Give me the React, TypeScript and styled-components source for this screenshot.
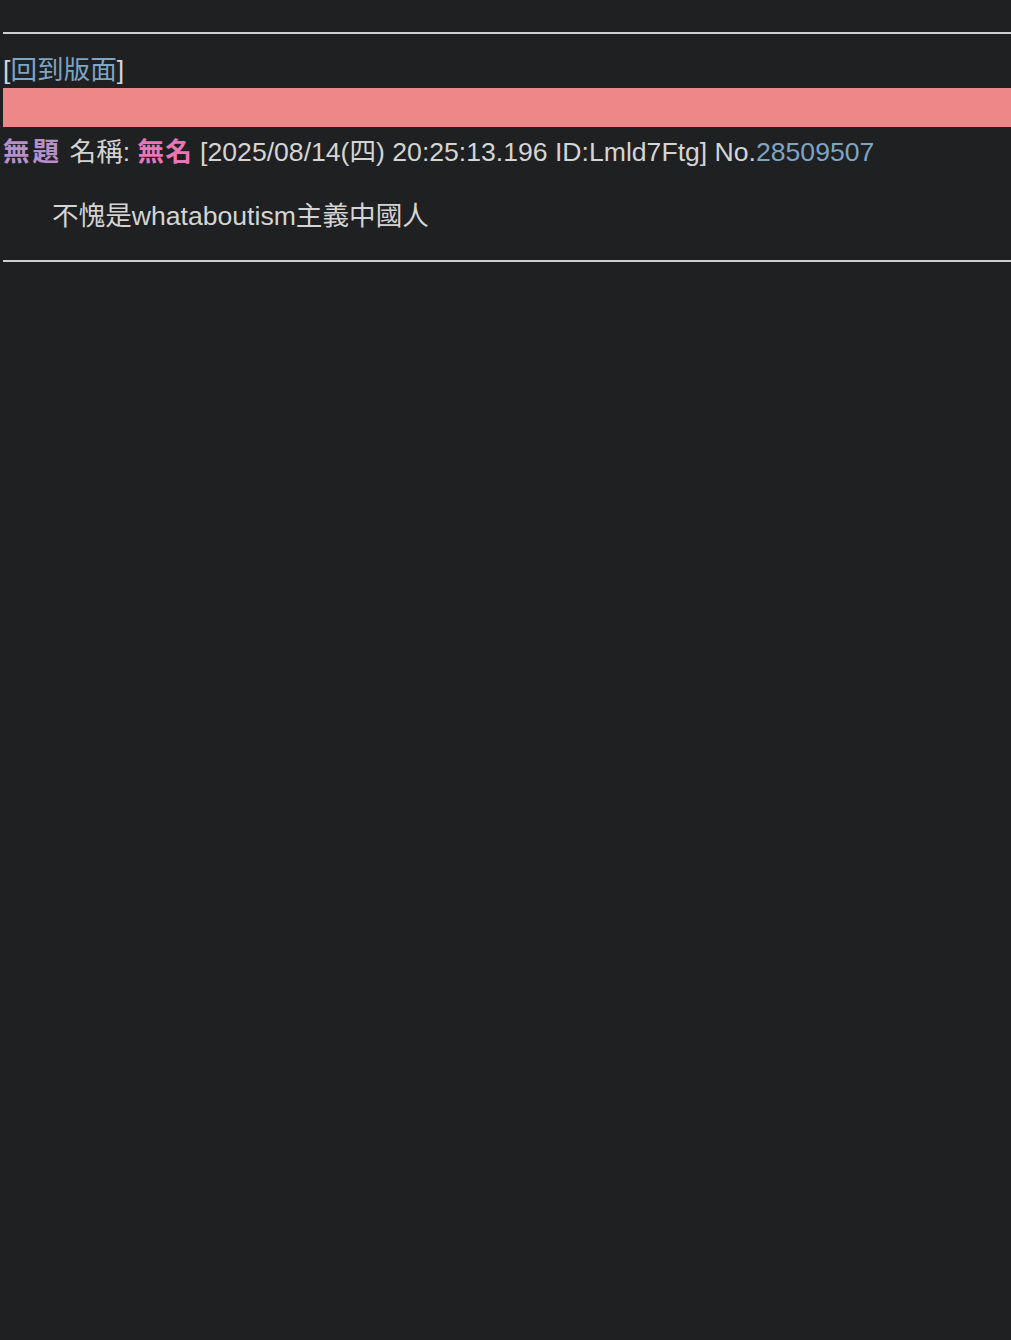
import React from "react";
import styled, { createGlobalStyle } from "styled-components";

const Global = createGlobalStyle`
  html, body { margin: 0; padding: 0; background: #1f2022; }
  body {
    color: #d4d4d4;
    font-family: "Liberation Sans", Arial, "Noto Sans CJK TC", sans-serif;
    font-size: 26.6px;
  }
`;

const Page = styled.div`
  padding: 32px 0 0 3px;
  min-height: 1308px;
`;

const Rule = styled.div<{ $top?: number }>`
  height: 2px;
  background: #cfcfcf;
  margin-top: ${(p) => p.$top ?? 0}px;
`;

const NavRow = styled.div`
  margin-top: 20px;
  line-height: 32px;
`;

const Link = styled.a`
  color: #7ea5c4;
  text-decoration: none;
`;

const Banner = styled.div`
  margin-top: 2px;
  height: 39px;
  background: #ee8888;
`;

const PostHead = styled.div`
  margin-top: 9px;
  line-height: 32px;
  white-space: nowrap;
`;

const Title = styled.span`
  color: #b690c9;
  font-weight: bold;
  letter-spacing: 3px;
`;

const Name = styled.span`
  color: #ea76b9;
  font-weight: bold;
  letter-spacing: 1px;
`;

const Quote = styled.div`
  margin: 32px 0 0 49px;
  line-height: 32px;
`;

export default function App() {
  return (
    <>
      <Global />
      <Page>
        <Rule />
        <NavRow>
          [<Link href="#">回到版面</Link>]
        </NavRow>
        <Banner />
        <PostHead>
          <Title>無題</Title> 名稱: <Name>無名</Name> [2025/08/14(四) 20:25:13.196 ID:Lmld7Ftg] No.
          <Link href="#">28509507</Link>
        </PostHead>
        <Quote>不愧是whataboutism主義中國人</Quote>
        <Rule $top={28} />
      </Page>
    </>
  );
}
